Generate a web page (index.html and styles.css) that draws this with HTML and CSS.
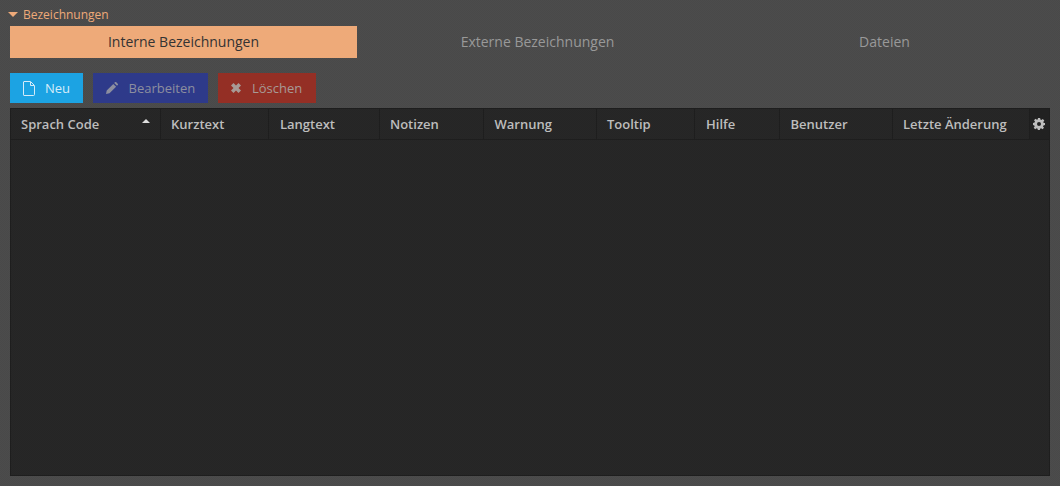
FILE: index.html
```html
<!DOCTYPE html>
<html lang="de">
<head>
<meta charset="utf-8">
<title>Bezeichnungen</title>
<link rel="stylesheet" href="styles.css">
</head>
<body>
<div class="panel">
  <div class="legend"><span class="caret"></span><span>Bezeichnungen</span></div>
  <div class="tabs">
    <div class="tab active">Interne Bezeichnungen</div>
    <div class="tab">Externe Bezeichnungen</div>
    <div class="tab">Dateien</div>
  </div>
  <div class="toolbar">
    <div class="btn btn-new">
      <svg class="ico" width="12" height="15" viewBox="0 0 12 15"><path d="M1 .5h6.500l4 4v9a1 1 0 0 1-1 1H1a.6.6 0 0 1-.5-.6V1a.6.6 0 0 1 .5-.5zM7.500 1v3.500H11" fill="none" stroke="#d6ecf9" stroke-width="1"/></svg>
      <span>Neu</span>
    </div>
    <div class="btn btn-edit off">
      <svg class="ico" width="12" height="12" viewBox="0 0 12 12"><path d="M0 12l.7-3.500L7.300 1.900l2.800 2.800L3.500 11.300zM8.200 1l.7-.7a1 1 0 0 1 1.400 0l1.400 1.400a1 1 0 0 1 0 1.400l-.7.700z" fill="#8c8e9f"/></svg>
      <span>Bearbeiten</span>
    </div>
    <div class="btn btn-del off">
      <svg class="ico" width="10" height="10" viewBox="0 0 10 10"><path d="M2.500 0L5 2.500 7.500 0 10 2.500 7.500 5 10 7.500 7.500 10 5 7.500 2.500 10 0 7.500 2.500 5 0 2.500z" fill="#a89a96"/></svg>
      <span>Löschen</span>
    </div>
  </div>
  <div class="grid">
    <div class="head">
      <div class="col c1">Sprach Code<span class="sort"></span></div>
      <div class="col c2">Kurztext</div>
      <div class="col c3">Langtext</div>
      <div class="col c4">Notizen</div>
      <div class="col c5">Warnung</div>
      <div class="col c6">Tooltip</div>
      <div class="col c7">Hilfe</div>
      <div class="col c8">Benutzer</div>
      <div class="col c9">Letzte Änderung</div>
      <div class="gear">
        <svg width="12" height="12" viewBox="0 0 12 12"><path fill-rule="evenodd" fill="#bdbdbd" d="M4.900 0h2.200l.3 1.600 1 .4L9.800 1l1.500 1.500-1 1.400.4 1L12 4.900v2.200l-1.600.3-.4 1 1 1.400-1.500 1.500-1.400-1-1 .4-.3 1.600H4.900l-.3-1.600-1-.4-1.400 1L.7 9.800l1-1.400-.4-1L0 7.100V4.900l1.600-.3.4-1-1-1.400L2.500.7l1.400 1 1-.4zM6 4a2 2 0 1 0 0 4 2 2 0 0 0 0-4z"/></svg>
      </div>
    </div>
  </div>
</div>
</body>
</html>
```
FILE: styles.css
```css
html, body {
  margin: 0;
  height: 100%;
  background: repeating-conic-gradient(#4c4c4c 0 25%, #494949 0 50%) 0 0 / 2px 2px;
  overflow: hidden;
}
body {
  font-family: "Open Sans", sans-serif;
  font-size: 13px;
}
.panel {
  width: 1060px;
  height: 486px;
  box-sizing: border-box;
  padding: 6px 10px 0;
  display: flex;
  flex-direction: column;
}
.legend {
  height: 20px;
  padding-bottom: 3px;
  box-sizing: border-box;
  display: flex;
  align-items: center;
  gap: 5px;
  margin-left: -2px;
  color: #eeaa79;
  font-size: 12px;
}
.caret {
  width: 0;
  height: 0;
  border-left: 5px solid transparent;
  border-right: 5px solid transparent;
  border-top: 5px solid #eeaa79;
  margin-top: -1px;
}
.tabs {
  display: flex;
  width: 1048px;
  height: 32px;
}
.tab {
  width: 347px;
  box-sizing: border-box;
  padding-bottom: 2px;
  display: flex;
  align-items: center;
  justify-content: center;
  color: #999;
  font-size: 14px;
}
.tab.active {
  background: #eeaa79;
  color: #333;
  margin-right: 7px;
}
.toolbar {
  display: flex;
  gap: 10px;
  margin-top: 15px;
  height: 30px;
}
.btn {
  display: flex;
  align-items: center;
  box-sizing: border-box;
  padding-left: 13px;
  font-size: 13px;
}
.btn-new { width: 73px; gap: 10px; background: #1ca3e3; color: #d6ecf9; }
.btn-edit { width: 115px; gap: 10.500px; background: #2e3a8a; color: #8c8e9f; }
.btn-del { width: 98px; gap: 11px; background: #942f25; color: #a89a96; }
.grid {
  margin-top: 5px;
  width: 1040px;
  height: 368px;
  box-sizing: border-box;
  background: repeating-conic-gradient(#272727 0 25%, #252525 0 50%) 0 0 / 2px 2px;
  border: 1px solid #1e1e1e;
}
.head {
  display: flex;
  height: 31px;
  box-sizing: border-box;
  border-bottom: 1px solid #1e1e1e;
}
.col {
  position: relative;
  box-sizing: border-box;
  padding-left: 10px;
  line-height: 30px;
  font-weight: 600;
  font-size: 13px;
  color: #bdbdbd;
  border-right: 1px solid #1e1e1e;
}
.c1 { width: 150px; }
.c2 { width: 108px; }
.c3 { width: 111px; padding-left: 11px; }
.c4 { width: 104px; }
.c5 { width: 113px; padding-left: 10.500px; }
.c6 { width: 98px; }
.c7 { width: 85px; padding-left: 11px; }
.c8 { width: 113px; padding-left: 10.500px; }
.c9 { width: 137px; }
.sort {
  position: absolute;
  right: 10px;
  top: 10px;
  width: 0;
  height: 0;
  border-left: 4px solid transparent;
  border-right: 4px solid transparent;
  border-bottom: 4px solid #ddd;
}
.gear {
  flex: 1;
  background: #212121;
  padding: 9px 0 0 3px;
}
.gear svg { display: block; }
```
